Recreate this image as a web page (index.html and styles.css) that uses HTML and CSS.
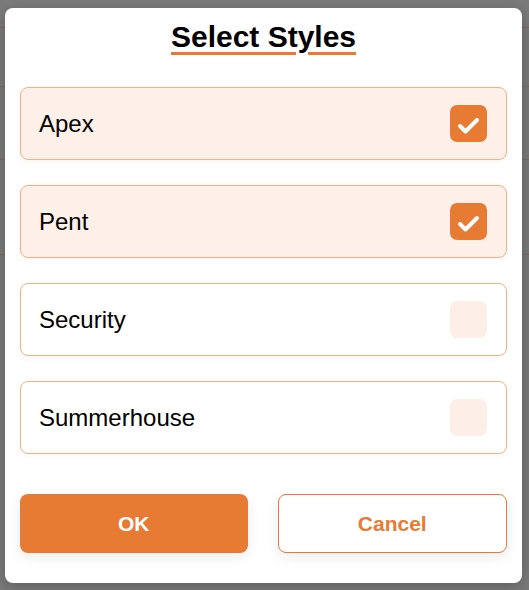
FILE: index.html
```html
<!DOCTYPE html>
<html lang="en">
<head>
<meta charset="utf-8">
<title>Select Styles</title>
<link rel="stylesheet" href="styles.css">
</head>
<body>
<div class="page">
  <div class="page-row r1"></div>
  <div class="page-row r2"></div>
  <div class="page-row r3"></div>
  <div class="page-row r4"></div>
</div>
<div class="overlay">
  <div class="modal">
    <h1 class="title">Select Styles</h1>
    <ul class="options">
      <li class="option selected">
        <span class="label">Apex</span>
        <span class="check on"><svg viewBox="0 0 37 37" width="37" height="37"><polyline points="10,21 15.5,26.5 27,15" fill="none" stroke="#fff" stroke-width="4" stroke-linecap="round" stroke-linejoin="round"/></svg></span>
      </li>
      <li class="option selected">
        <span class="label">Pent</span>
        <span class="check on"><svg viewBox="0 0 37 37" width="37" height="37"><polyline points="10,21 15.5,26.5 27,15" fill="none" stroke="#fff" stroke-width="4" stroke-linecap="round" stroke-linejoin="round"/></svg></span>
      </li>
      <li class="option">
        <span class="label">Security</span>
        <span class="check"></span>
      </li>
      <li class="option">
        <span class="label">Summerhouse</span>
        <span class="check"></span>
      </li>
    </ul>
    <div class="actions">
      <button class="btn btn-ok">OK</button>
      <button class="btn btn-cancel">Cancel</button>
    </div>
  </div>
</div>
</body>
</html>
```

FILE: styles.css
```css
html, body {
  margin: 0;
  padding: 0;
}
body {
  width: 529px;
  height: 590px;
  background: #7b7b7b;
  font-family: "Liberation Sans", Arial, sans-serif;
  overflow: hidden;
  position: relative;
}
.page {
  display: flex;
  flex-direction: column;
}
.page-row {
  border-bottom: 1px solid #8a6650;
}
.r1 { height: 27px; }
.r2 { height: 58px; }
.r3 { height: 72px; }
.r4 { height: 94px; }
.overlay {
  position: absolute;
  inset: 0;
  padding: 8px 7px 7px 5px;
  box-sizing: border-box;
}
.modal {
  background: #fff;
  border-radius: 8px;
  width: 517px;
  height: 575px;
  box-sizing: border-box;
  padding: 11px 15px 30px 15px;
  display: flex;
  flex-direction: column;
  box-shadow: 0 4px 16px rgba(0,0,0,0.25);
}
.title {
  margin: 0 0 32px 0;
  text-align: center;
  font-size: 30px;
  line-height: 36px;
  font-weight: bold;
  color: #000;
  text-decoration: underline;
  text-decoration-color: #e87b33;
  text-decoration-thickness: 3px;
  text-underline-offset: 5px;
}
.options {
  list-style: none;
  margin: 0;
  padding: 0;
  display: flex;
  flex-direction: column;
  gap: 25px;
}
.option {
  height: 73px;
  box-sizing: border-box;
  border: 1px solid #f4b184;
  border-radius: 8px;
  background: #fff;
  display: flex;
  align-items: center;
  justify-content: space-between;
  padding: 0 19px 0 18px;
  box-shadow: 0 2px 8px rgba(0,0,0,0.04);
}
.option.selected {
  background: #fdf0e8;
}
.label {
  font-size: 24px;
  color: #000;
}
.check {
  width: 37px;
  height: 37px;
  border-radius: 7px;
  background: #fdefe7;
  display: block;
}
.check.on {
  background: #e87b33;
}
.check svg {
  display: block;
}
.actions {
  margin-top: auto;
  display: flex;
  gap: 30px;
}
.btn {
  flex: 1;
  height: 59px;
  border-radius: 8px;
  font-family: "Liberation Sans", Arial, sans-serif;
  font-size: 21px;
  font-weight: bold;
  cursor: pointer;
  box-shadow: 0 4px 14px rgba(0,0,0,0.08);
}
.btn-ok {
  background: #e87b33;
  color: #fff;
  border: none;
}
.btn-cancel {
  background: #fff;
  color: #e87b33;
  border: 1px solid #e87b33;
}
```
